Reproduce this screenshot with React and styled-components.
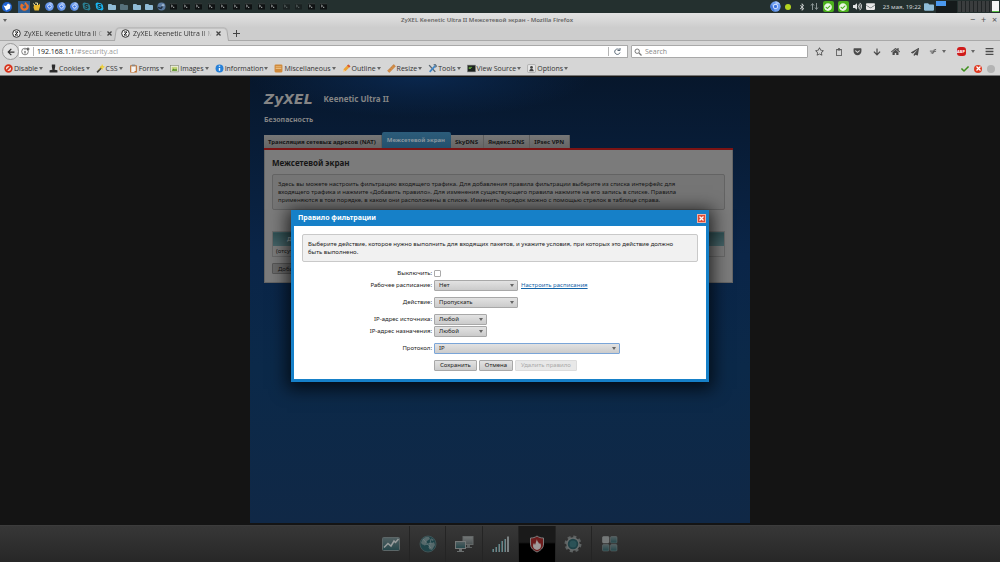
import { useState } from "react";
import styled, { createGlobalStyle, css } from "styled-components";
import {
  FaArrowDown,
  FaArrowLeft,
  FaBars,
  FaBluetoothB,
  FaCheck,
  FaCheckCircle,
  FaChrome,
  FaEnvelope,
  FaFirefoxBrowser,
  FaFolder,
  FaGetPocket,
  FaHome,
  FaPaperPlane,
  FaRegClipboard,
  FaRegStar,
  FaSkype,
  FaVolumeUp,
} from "react-icons/fa";

const taskIcons = [
  "firefox", "gimp", "chrome", "chrome", "chrome", "skypeDim", "skype",
  "folder", "folderDim", "folder", "folder", "steam",
  "term", "term", "term", "term", "term", "term", "term", "term", "term",
  "termDim", "termDim", "term", "term",
];

const devMenus = [
  "Disable", "Cookies", "CSS", "Forms", "Images", "Information",
  "Miscellaneous", "Outline", "Resize", "Tools", "View Source", "Options",
];

const sections = [
  "Трансляция сетевых адресов (NAT)",
  "Межсетевой экран",
  "SkyDNS",
  "Яндекс.DNS",
  "IPsec VPN",
];

const dock = ["monitor", "internet", "network", "wifi", "security", "system", "apps"];

const ChromiumIcon = ({ size }) => (
  <svg width={size} height={size} viewBox="0 0 16 16">
    <circle cx="8" cy="8" r="7.500" fill="#6f9ff0" />
    <path d="M8 .5a7.500 7.500 0 0 1 6.500 4H8Z" fill="#a9c6fa" />
    <path d="M1.500 4.500 5 10l2 5.400A7.500 7.500 0 0 1 1.500 4.500Z" fill="#4679d8" />
    <circle cx="8" cy="8" r="3.600" fill="#f2f6ff" />
    <circle cx="8" cy="8" r="2.400" fill="#3c74e0" />
  </svg>
);

const TaskIcon = ({ kind }) => {
  switch (kind) {
    case "firefox":
      return <FaFirefoxBrowser size={9} color="#e8702a" />;
    case "chrome":
      return <ChromiumIcon size={9} />;
    case "skype":
      return <FaSkype size={9} color="#18b4f0" />;
    case "skypeDim":
      return <FaSkype size={9} color="#2b7f92" />;
    case "folder":
      return <FaFolder size={8} color="#8fbcd6" />;
    case "folderDim":
      return <FaFolder size={8} color="#56717b" />;
    case "gimp":
      return (
        <svg width="9" height="9" viewBox="0 0 9 9">
          <path d="M2 3h4.5l1.5-1.5v3L6.8 8.500H2.600L1.500 5.500Z" fill="#e3b62f" />
          <path d="M1 1.500 3 3M3 1h2.500v2" stroke="#f3e6a0" fill="none" />
        </svg>
      );
    case "steam":
      return (
        <svg width="9" height="9" viewBox="0 0 9 9">
          <circle cx="4.500" cy="4.500" r="4" fill="#5b7ba0" />
          <path d="M1 5.500 4 6.500 6.500 3" stroke="#1f2e42" fill="none" strokeWidth="1.400" />
          <circle cx="6" cy="3.200" r="1.300" fill="#9db4cc" />
        </svg>
      );
    default:
      return (
        <svg width="7" height="7" viewBox="0 0 7 7" opacity={kind === "termDim" ? 0.45 : 1}>
          <rect width="7" height="6" y=".5" rx=".5" fill="#0e1112" />
          <path d="M0 .8h7" stroke="#4d5556" strokeWidth=".6" />
          <path d="m1.200 2 1.300 1-1.300 1M3 4.300h1.300" stroke="#d6dada" fill="none" strokeWidth=".8" />
        </svg>
      );
  }
};

const DevIcon = ({ name }) => (
  <svg width="9" height="9" viewBox="0 0 16 16">
    {name === "Disable" && (
      <>
        <circle cx="8" cy="8" r="6" fill="#f5dcd4" stroke="#d8341c" strokeWidth="3" />
        <path d="M4 12 12 4" stroke="#d8341c" strokeWidth="3" />
      </>
    )}
    {name === "Cookies" && (
      <path d="M5 1h6v4l-1 5 5 1v4H1v-4l5-1-1-5Z" fill="#2c2c2c" />
    )}
    {name === "CSS" && (
      <>
        <path d="M2 15 12 4" stroke="#3d3d3d" strokeWidth="3" />
        <path d="M4 11 10 5M11 1l1 3 3 1-3 2-1 3-1-3-3-2 3-1Z" stroke="#f0cf31" fill="#f7dc45" />
      </>
    )}
    {name === "Forms" && (
      <>
        <rect x="2" y="2" width="12" height="13" rx="1" fill="#c0702f" />
        <path d="M4 4h8v7l-3 3H4Z" fill="#f4f4f4" />
        <rect x="5" y="1" width="6" height="3" fill="#8a8a8a" />
      </>
    )}
    {name === "Images" && (
      <>
        <rect x="1" y="3" width="14" height="11" fill="#f0f0e4" stroke="#7c816d" />
        <path d="M3 5h10v7H3Z" fill="#c4d47a" />
        <path d="m3 12 3-4 3 2 2-2 2 4Z" fill="#4f8b26" />
      </>
    )}
    {name === "Information" && (
      <>
        <circle cx="8" cy="8" r="7" fill="#2680d8" />
        <path d="M8 7v5M8 3v2" stroke="#fff" strokeWidth="2.500" />
      </>
    )}
    {name === "Miscellaneous" && (
      <>
        <rect x="1" y="1" width="14" height="14" rx="2" fill="#d08a3c" />
        <path d="M3 5h10M3 8h10" stroke="#f0c586" strokeWidth="1.500" />
      </>
    )}
    {name === "Outline" && (
      <>
        <path d="m2 14 1-5 8-8 4 3-8 8Z" fill="#eda234" />
        <path d="m11 1 4 3-2 2-4-3Z" fill="#d2503a" />
        <path d="m2 14 1-4 3 3Z" fill="#f5dfb9" />
      </>
    )}
    {name === "Resize" && (
      <>
        <path d="m1 12 11-11 3 3L4 15Z" fill="#d99047" stroke="#b8753a" />
        <path d="m5 9 1.500 1.500M8 6l1.500 1.500M11 3l1.500 1.500" stroke="#9d6736" />
      </>
    )}
    {name === "Tools" && (
      <>
        <path d="M2 2 13 14" stroke="#5b6670" strokeWidth="2.500" />
        <path d="M14 2 3 14" stroke="#3f86c8" strokeWidth="3" />
        <path d="M10 1h3l2 3-2 2" stroke="#6b7780" fill="none" strokeWidth="2" />
      </>
    )}
    {name === "View Source" && (
      <>
        <rect x="1" y="2" width="14" height="12" fill="#1d2320" stroke="#777" />
        <path d="M3 6h6M3 8h4" stroke="#69b23d" strokeWidth="1.500" />
      </>
    )}
    {name === "Options" && (
      <>
        <rect x="1" y="1" width="14" height="14" rx="2" fill="#e6e6e6" stroke="#909090" />
        <circle cx="8" cy="6" r="2.500" fill="#444" />
        <path d="M4 13c0-6 8-6 8 0Z" fill="#444" />
      </>
    )}
  </svg>
);

const DockIcon = ({ name }) => (
  <svg width="20" height="20" viewBox="0 0 20 20">
    <defs>
      <linearGradient id="teal" x1="0" y1="0" x2="0" y2="1">
        <stop offset="0" stopColor="#526062" />
        <stop offset="1" stopColor="#24464a" />
      </linearGradient>
      <linearGradient id="ash" x1="0" y1="0" x2="0" y2="1">
        <stop offset="0" stopColor="#747777" />
        <stop offset="1" stopColor="#4c5455" />
      </linearGradient>
    </defs>
    {name === "monitor" && (
      <>
        <rect x="1.500" y="3.500" width="17" height="13" rx="1" fill="url(#teal)" stroke="#5c6667" />
        <path d="m3 13.500 4-4 3 2.500 3-5 1.500 1.500L17.500 5" stroke="#989c9c" strokeWidth="1.500" fill="none" />
      </>
    )}
    {name === "internet" && (
      <>
        <circle cx="10" cy="10" r="8" fill="#1f4449" stroke="#3f5254" />
        <path d="M4 6c2-3 5-4 7-3l1 2-3 2-1 3-3 1-2-2ZM12 10l4-2 1 3-3 5-3-1ZM13 4l3 2-2 1Z" fill="#56696b" />
        <path d="M5 5l8 9M13 5l-2 9M6 11l8-2" stroke="#7b8889" strokeWidth=".6" fill="none" />
      </>
    )}
    {name === "network" && (
      <>
        <rect x="9" y="2.500" width="10" height="8" fill="url(#ash)" stroke="#646868" />
        <path d="M13 11h3v2h2v1h-7v-1h2Z" fill="#5c6060" />
        <rect x="1.500" y="7.500" width="10" height="7" fill="url(#teal)" stroke="#747878" />
        <path d="M5 15h3v2h2v1H3v-1h2Z" fill="#6a6e6e" />
      </>
    )}
    {name === "wifi" && (
      <>
        <path d="M2 15h2v3H2ZM5 13h2v5H5ZM8 10h2v8H8ZM11 7h2v11h-2ZM14 5h2v13h-2Z" fill="#3d6468" />
        <path d="M3 15h1v3H3ZM6 13h1v5H6ZM9 10h1v8H9ZM12 7h1v11h-1ZM15 5h1v13h-1ZM17 2.500h2V18h-2Z" fill="#7b8182" />
      </>
    )}
    {name === "security" && (
      <>
        <path d="M10 2c2 1.500 4 2 6.500 2v6c0 4-3 6.500-6.500 8-3.500-1.500-6.500-4-6.500-8V4C6 4 8 3.500 10 2Z" fill="#6d1c1c" stroke="#7c7c7c" />
        <path d="M10 16c-4-1-5-4-3-7l1 2 2-6c0 3 2 3 2 5l1-1c2 3 1 6-3 7Z" fill="#a09a9a" />
      </>
    )}
    {name === "system" && (
      <>
        <circle cx="10" cy="10" r="7" fill="none" stroke="#5e6262" strokeWidth="3" strokeDasharray="3 2.500" />
        <circle cx="10" cy="10" r="6" fill="#1f4146" stroke="#686c6c" strokeWidth="1.500" />
        <circle cx="10" cy="10" r="3.500" fill="#2b5257" />
      </>
    )}
    {name === "apps" && (
      <>
        <rect x="2.500" y="2.500" width="6.500" height="6.500" rx="1" fill="#747878" stroke="#7e8282" strokeWidth=".5" />
        <rect x="10.500" y="2.500" width="6.500" height="6.500" rx="1" fill="url(#teal)" stroke="#667172" strokeWidth=".5" />
        <rect x="2.500" y="10.500" width="6.500" height="6.500" rx="1" fill="url(#teal)" stroke="#667172" strokeWidth=".5" />
        <rect x="10.500" y="10.500" width="6.500" height="6.500" rx="1" fill="url(#teal)" stroke="#667172" strokeWidth=".5" />
      </>
    )}
  </svg>
);

const ZIcon = () => (
  <svg width="9" height="9" viewBox="0 0 9 9">
    <circle cx="4.500" cy="4.500" r="3.800" fill="#f4f4f4" stroke="#333" />
    <path d="M3 3h3L3 6h3" stroke="#222" fill="none" />
  </svg>
);

const CrossIcon = ({ color }) => (
  <svg width="7" height="7" viewBox="0 0 7 7">
    <path d="m1.500 1.500 4 4M5.500 1.500l-4 4" stroke={color} strokeWidth="1.300" />
  </svg>
);

const SystemPanel = () => (
  <Panel>
    <StartButton aria-label="Меню">
      <svg width="10" height="10" viewBox="0 0 10 10">
        <circle cx="5" cy="5" r="5" fill="#1f63d2" />
        <path d="M1.500 3.500 4 4l2-2.500L8.500 3 8 6.500 4 8.500 3 6Z" fill="#fff" />
      </svg>
    </StartButton>
    <TaskList>
      {taskIcons.map((kind, i) => (
        <Task key={i} $active={i === 0}>
          <TaskIcon kind={kind} />
        </Task>
      ))}
    </TaskList>
    <Tray>
      <ChromiumIcon size={11} />
      <Dot />
      <FaBluetoothB size={8} color="#d5d8d8" />
      <svg width="9" height="9" viewBox="0 0 9 9">
        <path d="M2.500 8V2M1 3.500 2.500 1.500 4 3.500M6.500 1v6M5 5.500l1.500 2 1.500-2" stroke="#8b9494" fill="none" />
      </svg>
      <Checked>
        <FaCheckCircle size={8} />
      </Checked>
      <Checked>
        <FaCheckCircle size={8} />
      </Checked>
      <FaVolumeUp size={9} color="#e2e4e4" />
      <FaEnvelope size={9} color="#e8e8e8" />
    </Tray>
    <Clock>23 мая, 19:22</Clock>
    <FaFolder size={10} color="#8fbcd6" />
    <Pager>
      <i />
    </Pager>
    <Cpu>
      <i />
    </Cpu>
  </Panel>
);

const Browser = () => (
  <>
    <TitleBar>
      <Caret />
      <WindowTitle>ZyXEL Keenetic Ultra II Межсетевой экран - Mozilla Firefox</WindowTitle>
      <WindowButton aria-label="Свернуть">−</WindowButton>
      <WindowButton aria-label="Развернуть">+</WindowButton>
      <WindowButton aria-label="Закрыть">×</WindowButton>
    </TitleBar>
    <TabStrip>
      <BrowserTab>
        <ZIcon />
        <span>ZyXEL Keenetic Ultra II Си</span>
        <CrossIcon color="#444" />
      </BrowserTab>
      <BrowserTab $active>
        <ZIcon />
        <span>ZyXEL Keenetic Ultra II М</span>
        <CrossIcon color="#444" />
      </BrowserTab>
      <NewTab aria-label="Новая вкладка">
        <svg width="7" height="7" viewBox="0 0 7 7">
          <path d="M3.500 0v7M0 3.500h7" stroke="#444" />
        </svg>
      </NewTab>
    </TabStrip>
    <NavBar>
      <BackButton aria-label="Назад">
        <FaArrowLeft size={8} />
      </BackButton>
      <UrlBox>
        <svg width="9" height="9" viewBox="0 0 9 9">
          <circle cx="4" cy="4.500" r="3.300" fill="none" stroke="#666" strokeWidth=".8" />
          <path d="M4 4v2.500M4 2.300v.8M7 .5v3M5.500 2h3" stroke="#444" />
        </svg>
        <Split />
        <Address>
          192.168.1.1<em>/#security.acl</em>
        </Address>
        <Split />
        <Reload width="9" height="9" viewBox="0 0 9 9">
          <path d="M7 5.500A2.700 2.700 0 1 1 6.500 3M7 1v2.500H4.500" stroke="#5b6a78" fill="none" />
        </Reload>
      </UrlBox>
      <SearchBox>
        <svg width="8" height="8" viewBox="0 0 8 8">
          <circle cx="3.200" cy="3.200" r="2.200" fill="none" stroke="#777" />
          <path d="m5 5 2.500 2.500" stroke="#777" strokeWidth="1.300" />
        </svg>
        <SearchInput aria-label="Search" placeholder="Search" />
      </SearchBox>
      <NavIcons>
        <FaRegStar size={9} />
        <FaRegClipboard size={8} />
        <FaGetPocket size={9} />
        <FaArrowDown size={8} />
        <FaHome size={9} />
        <FaPaperPlane size={8} />
        <IconPair>
          <svg width="8" height="8" viewBox="0 0 9 8">
            <path d="M1 3h4M2 5h3M5 2l3-1M5 4l3-1M4 6l2-4" stroke="#555" fill="none" />
          </svg>
          <Caret />
        </IconPair>
        <IconPair>
          <Abp>ABP</Abp>
          <Caret />
        </IconPair>
        <FaBars size={9} />
      </NavIcons>
    </NavBar>
    <DevBar>
      {devMenus.map((name) => (
        <DevMenu key={name}>
          <DevIcon name={name} />
          {name}
          <Caret />
        </DevMenu>
      ))}
      <DevStatus>
        <FaCheck size={8} color="#3e8f1d" />
        <Badge $color="#e03a22">
          <CrossIcon color="#fff" />
        </Badge>
        <Badge $color="#b3b3b3" />
      </DevStatus>
    </DevBar>
  </>
);

const Select = ({ id, size, options, active }) => (
  <SelectWrap $size={size}>
    <SelectBox id={id} $active={active}>
      {options.map((option) => (
        <option key={option}>{option}</option>
      ))}
    </SelectBox>
  </SelectWrap>
);

const RuleDialog = () => {
  const [disabled, setDisabled] = useState(false);

  return (
    <Dialog role="dialog" aria-labelledby="rule-title">
      <DialogHead>
        <DialogTitle id="rule-title">Правило фильтрации</DialogTitle>
        <CloseButton aria-label="Закрыть">
          <CrossIcon color="#fff" />
        </CloseButton>
      </DialogHead>
      <DialogBody>
        <Note>
          Выберите действие, которое нужно выполнить для входящих пакетов, и укажите условия, при
          которых это действие должно
          <br />
          быть выполнено.
        </Note>
        <Form onSubmit={(e) => e.preventDefault()}>
          <Row>
            <Label htmlFor="off">Выключить:</Label>
            <Checkbox
              id="off"
              type="checkbox"
              checked={disabled}
              onChange={(e) => setDisabled(e.target.checked)}
            />
          </Row>
          <Row $gap="5px">
            <Label htmlFor="schedule">Рабочее расписание:</Label>
            <Select id="schedule" size="84px" options={["Нет"]} />
            <Link href="#schedules">Настроить расписания</Link>
          </Row>
          <Row $gap="5px">
            <Label htmlFor="action">Действие:</Label>
            <Select id="action" size="84px" options={["Пропускать", "Запрещать"]} />
          </Row>
          <Row>
            <Label htmlFor="source">IP-адрес источника:</Label>
            <Select id="source" size="53px" options={["Любой"]} />
          </Row>
          <Row $gap="5px">
            <Label htmlFor="target">IP-адрес назначения:</Label>
            <Select id="target" size="53px" options={["Любой"]} />
          </Row>
          <Row $gap="5px">
            <Label htmlFor="protocol">Протокол:</Label>
            <Select id="protocol" size="186px" options={["IP", "TCP", "UDP", "ICMP"]} active />
          </Row>
          <Row>
            <Label as="span" />
            <Button>Сохранить</Button>
            <Button type="button">Отмена</Button>
            <Button type="button" disabled>
              Удалить правило
            </Button>
          </Row>
        </Form>
      </DialogBody>
    </Dialog>
  );
};

const App = () => {
  return (
    <Screen>
      <GlobalStyle />
      <SystemPanel />
      <Browser />
      <Page>
        <Column>
          <Brand>
            <Logo>ZyXEL</Logo>
            <Model>Keenetic Ultra II</Model>
          </Brand>
          <SectionName>Безопасность</SectionName>
          <Tabs>
            {sections.map((name, i) => (
              <Tab key={name} $active={i === 1}>
                {name}
              </Tab>
            ))}
          </Tabs>
          <Card>
            <CardTitle>Межсетевой экран</CardTitle>
            <Note $dim>
              Здесь вы можете настроить фильтрацию входящего трафика. Для добавления правила
              фильтрации выберите из списка интерфейс для
              <br />
              входящего трафика и нажмите «Добавить правило». Для изменения существующего правила
              нажмите на его запись в списке. Правила
              <br />
              применяются в том порядке, в каком они расположены в списке. Изменить порядок можно с
              помощью стрелок в таблице справа.
            </Note>
            <Rules>
              <thead>
                <tr>
                  <th>Действие</th>
                </tr>
              </thead>
              <tbody>
                <tr>
                  <td>(отсутствуют)</td>
                </tr>
              </tbody>
            </Rules>
            <Button $dim>Добавить правило</Button>
          </Card>
        </Column>
        <RuleDialog />
      </Page>
      <Dock>
        <DockList>
          {dock.map((name) => (
            <DockButton key={name} aria-label={name} $active={name === "security"}>
              <DockIcon name={name} />
            </DockButton>
          ))}
        </DockList>
      </Dock>
    </Screen>
  );
};

export default App;

const GlobalStyle = createGlobalStyle`
  * {
    box-sizing: border-box;
  }

  body {
    margin: 0;
    background: #141414;
    font-family: "Noto Sans", "Open Sans", sans-serif;
    font-size: 6px;
    line-height: 8px;
    color: #222;
  }

  button, input, select {
    font: inherit;
    color: inherit;
    margin: 0;
  }

  button {
    border: 0;
    padding: 0;
    background: none;
  }

  svg {
    flex: none;
    display: block;
  }
`;

const chromeText = css`
  font-family: "Open Sans", sans-serif;
  font-size: 7px;
  color: #333;
`;

const Screen = styled.div`
  display: flex;
  flex-direction: column;
  min-height: 100vh;
`;

const Panel = styled.div`
  display: flex;
  align-items: center;
  height: 13px;
  background: #24302f;
  color: #d0d4d4;
`;

const StartButton = styled.button`
  padding: 0 6px 0 2px;
`;

const TaskList = styled.div`
  display: grid;
  grid-template-columns: repeat(25, 1fr);
  width: 312px;
`;

const Task = styled.button`
  display: flex;
  align-items: center;
  justify-content: center;
  height: 12px;
  background: ${({ $active }) => ($active ? "#2f5f93" : "transparent")};
`;

const Tray = styled.div`
  display: flex;
  align-items: center;
  gap: 4px;
  margin-left: auto;
`;

const Dot = styled.span`
  width: 6px;
  height: 6px;
  margin: 0 3px 0 0;
  border-radius: 50%;
  background: #b4d520;
`;

const Checked = styled.span`
  display: flex;
  align-items: center;
  justify-content: center;
  width: 11px;
  height: 11px;
  border-radius: 2px;
  background: #4bb01c;
  color: #e9f7e2;
`;

const Clock = styled.time`
  margin: 0 3px 0 8px;
`;

const Pager = styled.span`
  width: 21px;
  height: 12px;
  margin-left: 2px;
  background: #151a1b;

  i {
    display: block;
    width: 10px;
    height: 5px;
    background: #4a98ee;
  }
`;

const Cpu = styled.span`
  display: flex;
  justify-content: flex-end;
  width: 41px;
  height: 11px;
  margin: 0 1px;
  background: repeating-linear-gradient(90deg, #3a3d3e 0 3px, #202425 3px 4px);

  i {
    width: 7px;
    background: #f4f4f4;
    border-bottom: 1px solid #58c043;
  }
`;

const TitleBar = styled.div`
  display: flex;
  align-items: center;
  height: 14px;
  padding: 0 0 0 3px;
  background: linear-gradient(#e2e2e2, #cecece);
`;

const WindowTitle = styled.div`
  flex: 1;
  text-align: center;
  font-weight: 600;
  color: #666;
`;

const WindowButton = styled.button`
  width: 11px;
  font-size: 9px;
  color: #555;
`;

const Caret = styled.span`
  flex: none;
  border: 2px solid transparent;
  border-top: 3px solid #666;
  border-bottom: 0;
`;

const TabStrip = styled.div`
  display: flex;
  align-items: stretch;
  height: 14px;
  padding-left: 8px;
  background: #cdcdcd;
  border-bottom: 1px solid #a9a9a9;
`;

const BrowserTab = styled.div`
  ${chromeText}
  position: relative;
  z-index: 0;
  display: flex;
  align-items: center;
  gap: 3px;
  width: 109px;
  padding: 0 4px;

  span {
    flex: 1;
    min-width: 0;
    white-space: nowrap;
    mask-image: linear-gradient(90deg, #000 88%, transparent);
  }

  ${({ $active }) =>
    $active &&
    css`
      &::before {
        content: "";
        position: absolute;
        z-index: -1;
        inset: 0 -3px -1px -3px;
        background: #d6d6d6;
        border: 1px solid #a9a9a9;
        border-bottom: 0;
        border-radius: 4px 4px 0 0;
        transform: perspective(20px) rotateX(3deg);
        transform-origin: bottom;
      }
    `}
`;

const NewTab = styled.button`
  display: flex;
  align-items: center;
  justify-content: center;
  width: 20px;
`;

const NavBar = styled.div`
  ${chromeText}
  display: flex;
  align-items: center;
  height: 21px;
  padding: 0 6px 0 2px;
  background: #d6d6d6;
`;

const BackButton = styled.button`
  display: flex;
  align-items: center;
  justify-content: center;
  width: 17px;
  height: 17px;
  border: 1px solid #999;
  border-radius: 50%;
  background: #e3e3e3;
`;

const field = css`
  display: flex;
  align-items: center;
  gap: 3px;
  height: 13px;
  padding: 0 2px;
  border: 1px solid #a9a9a9;
  border-radius: 1px;
  background: #fff;
`;

const UrlBox = styled.div`
  ${field}
  flex: 1;
  border-left: 0;
`;

const Reload = styled.svg`
  margin: 0 3px 0 1px;
`;

const Address = styled.div`
  flex: 1;
  color: #222;

  em {
    font-style: normal;
    color: #999;
  }
`;

const Split = styled.span`
  width: 1px;
  height: 9px;
  background: #b5b5b5;
`;

const SearchBox = styled.div`
  ${field}
  flex: 0 1 177px;
  margin: 0 7px 0 3px;
`;

const SearchInput = styled.input`
  flex: 1;
  min-width: 0;
  padding: 0;
  border: 0;
  outline: 0;

  &::placeholder {
    color: #888;
  }
`;

const NavIcons = styled.div`
  display: flex;
  align-items: center;
  justify-content: space-between;
  width: 179px;
  color: #4b4b4b;
`;

const IconPair = styled.span`
  display: flex;
  align-items: center;
  gap: 5px;
`;

const Abp = styled.span`
  width: 9px;
  height: 9px;
  border-radius: 3px;
  background: #cf1b1b;
  color: #fff;
  font-size: 4px;
  font-weight: 700;
  line-height: 9px;
  text-align: center;
`;

const DevBar = styled.div`
  ${chromeText}
  display: flex;
  align-items: center;
  gap: 6px;
  height: 14px;
  padding: 0 5px 0 4px;
  background: #d6d6d6;
  border-bottom: 1px solid #777;
`;

const DevMenu = styled.button`
  display: flex;
  align-items: center;
  gap: 1px;
`;

const DevStatus = styled.div`
  display: flex;
  align-items: center;
  gap: 5px;
  margin-left: auto;
`;

const Badge = styled.span`
  display: flex;
  align-items: center;
  justify-content: center;
  width: 8px;
  height: 8px;
  border-radius: 50%;
  background: ${({ $color }) => $color};
`;

const Page = styled.main`
  position: relative;
  flex: 1;
  display: flex;
  justify-content: center;
  padding: 1px 0 2px;
  background: #141414;
`;

const Column = styled.div`
  width: 50%;
  min-width: 500px;
  padding: 14px 17px 40px 14px;
  background: radial-gradient(ellipse 170px 40px at 34% 0, #0a274d, transparent),
    linear-gradient(#07172c, #0a2548 40%, #0b2949 65%, #102846);
`;

const Brand = styled.div`
  display: flex;
  align-items: center;
  gap: 11px;
  height: 15px;
  color: #858585;
`;

const Logo = styled.div`
  font: italic 700 14px "DejaVu Sans", sans-serif;
`;

const Model = styled.div`
  font-size: 8px;
  font-weight: 700;
`;

const SectionName = styled.h1`
  margin: 9px 0 8px;
  font-size: 7px;
  font-weight: 700;
  line-height: 9px;
  color: #858585;
`;

const Tabs = styled.nav`
  display: flex;
  align-items: flex-end;
  border-bottom: 2px solid #7c1414;
`;

const Tab = styled.button`
  height: 13px;
  padding: 0 5px 0 4px;
  background: linear-gradient(#777, #656565);
  border-right: 1px solid #5d5d5d;
  font-weight: 700;
  color: #161616;

  ${({ $active }) =>
    $active &&
    css`
      height: 16px;
      padding: 0 6px 0 5px;
      border: 0;
      border-radius: 2px 2px 0 0;
      background: linear-gradient(#2c5c7a, #23506d);
      color: #8b979f;
    `}
`;

const Card = styled.section`
  padding: 8px 7px;
  background: #7b7b7b;
  border: 1px solid #656565;
  border-top: 0;
  color: #161616;
`;

const CardTitle = styled.h2`
  margin: 0 0 6px;
  font-size: 8px;
  font-weight: 700;
  line-height: 10px;
`;

const Note = styled.p`
  margin: 0;
  padding: 5px;
  border: 1px solid ${({ $dim }) => ($dim ? "#636363" : "#c9c9c9")};
  border-radius: 2px;
  background: ${({ $dim }) => ($dim ? "#757575" : "#f1f1f1")};
`;

const Rules = styled.table`
  width: 100%;
  margin: 21px 0 6px;
  border-collapse: collapse;
  border: 1px solid #686868;
  text-align: left;

  th {
    height: 14px;
    padding: 0 14px;
    background: linear-gradient(#2f4f52, #466468);
    color: #8d9a9b;
  }

  td {
    height: 11px;
    padding: 0 3px;
  }
`;

const Button = styled.button`
  height: 11px;
  padding: 0 5px;
  border: 1px solid #a8a8a8;
  border-radius: 1px;
  background: linear-gradient(#e2e2e2, #cbcbcb);

  &:disabled {
    border-color: #dcdcdc;
    background: #e8e8e8;
    color: #aaa;
  }

  ${({ $dim }) =>
    $dim &&
    css`
      border-color: #555;
      background: #696969;
      color: #161616;
    `}
`;

const Dialog = styled.section`
  position: absolute;
  top: 134px;
  left: 50%;
  width: 418px;
  transform: translateX(-50%);
  padding: 0 3px 3px;
  background: #1680c8;
  box-shadow: 0 3px 16px 4px rgba(0, 0, 0, 0.7);
`;

const DialogHead = styled.header`
  display: flex;
  align-items: center;
  justify-content: space-between;
  height: 16px;
  padding-left: 4px;
`;

const DialogTitle = styled.h2`
  margin: 0;
  font-size: 7px;
  font-weight: 700;
  color: #fff;
`;

const CloseButton = styled.button`
  display: flex;
  align-items: center;
  justify-content: center;
  width: 9px;
  height: 9px;
  border: 1px solid #f2b0a4;
  background: #dd4a33;
`;

const DialogBody = styled.div`
  padding: 8px;
  background: #fff;
`;

const Form = styled.form`
  display: flex;
  flex-direction: column;
  padding-top: 5px;
`;

const Row = styled.div`
  display: flex;
  align-items: center;
  gap: 2px;
  height: 12px;
  margin-bottom: ${({ $gap }) => $gap || "0"};
`;

const Label = styled.label`
  width: 130px;
  text-align: right;
`;

const Checkbox = styled.input`
  width: 7px;
  height: 7px;
  appearance: none;
  border: 1px solid #aaa;
  border-radius: 1px;
  background: #fff;

  &:checked {
    background: #1680c8;
  }
`;

const SelectWrap = styled.span`
  display: grid;
  align-items: center;
  width: ${({ $size }) => $size};

  &::after {
    content: "";
    grid-area: 1 / 1;
    justify-self: end;
    margin-right: 4px;
    border: 2px solid transparent;
    border-top: 3px solid #666;
    border-bottom: 0;
    pointer-events: none;
  }
`;

const SelectBox = styled.select`
  grid-area: 1 / 1;
  width: 100%;
  height: 11px;
  padding: 0 4px;
  appearance: none;
  border: 1px solid ${({ $active }) => ($active ? "#7aa5d8" : "#a8a8a8")};
  border-radius: 1px;
  background: linear-gradient(#e2e2e2, #cbcbcb);
  line-height: 9px;
`;

const Link = styled.a`
  margin-left: 1px;
  color: #1464a8;
`;

const Dock = styled.footer`
  display: flex;
  justify-content: center;
  height: 37px;
  padding-left: 2px;
  border-top: 1px solid #3c3c3c;
  background: linear-gradient(#373737, #272727);
`;

const DockList = styled.nav`
  display: grid;
  grid-template-columns: repeat(7, 1fr);
  width: 255px;
`;

const DockButton = styled.button`
  display: flex;
  align-items: center;
  justify-content: center;
  border-right: 1px solid #242424;
  background: ${({ $active }) => ($active ? "linear-gradient(#1a1a1a 45%, #000 50%)" : "none")};

  &:last-child {
    border-right: 0;
  }
`;
